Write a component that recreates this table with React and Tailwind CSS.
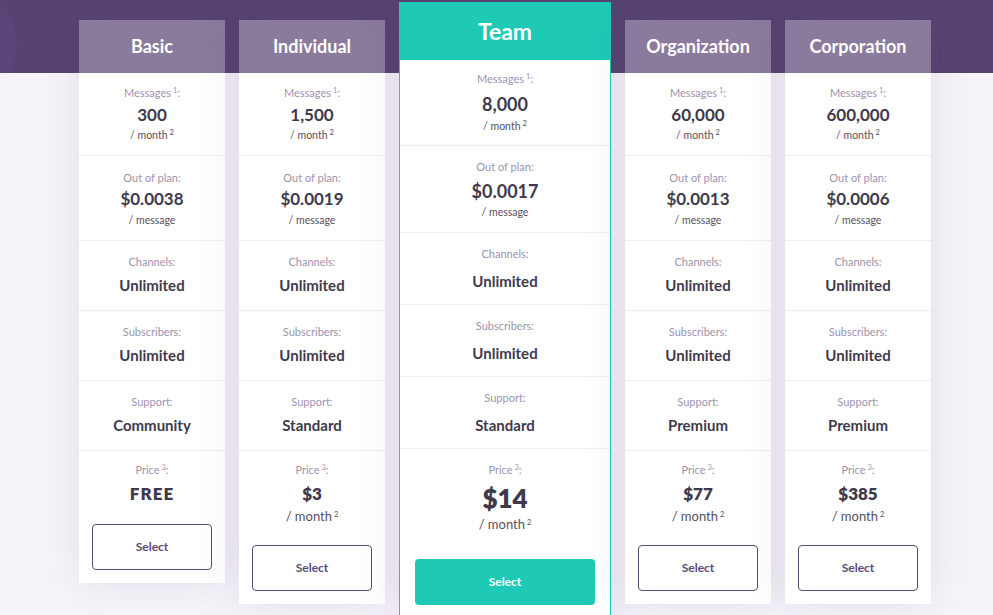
import React from "react";

const plans = [
  { name: "Basic", messages: "300", out: "$0.0038", support: "Community", price: "FREE", monthly: false },
  { name: "Individual", messages: "1,500", out: "$0.0019", support: "Standard", price: "$3", monthly: true },
  { name: "Team", messages: "8,000", out: "$0.0017", support: "Standard", price: "$14", monthly: true, featured: true },
  { name: "Organization", messages: "60,000", out: "$0.0013", support: "Premium", price: "$77", monthly: true },
  { name: "Corporation", messages: "600,000", out: "$0.0006", support: "Premium", price: "$385", monthly: true },
];

const label = "text-[11px] leading-[14px] text-[#9d92b0]";
const value = "leading-[22px] font-bold text-[#3f3a4b]";
const sub = "text-[10.5px] leading-[14px] text-[#56505f]";

function Sup({ n }) {
  return <sup className="text-[7.5px] ml-[2px]">{n}</sup>;
}

function PlanCard({ plan }) {
  const f = plan.featured;
  return (
    <div
      className={
        f
          ? "w-[212px] shrink-0 bg-white border border-[#1ecab6] shadow-[0_0_40px_rgba(87,67,114,0.12)]"
          : "w-[146px] shrink-0 mt-[18px] bg-white shadow-[0_0_40px_rgba(87,67,114,0.12)]"
      }
    >
      {/* header */}
      <div
        className={
          f
            ? "h-[57px] bg-[#1ecab6] flex items-center justify-center text-white font-bold text-[23px]"
            : "h-[53px] bg-[#8a7a9c] flex items-center justify-center text-white font-bold text-[18px]"
        }
      >
        {plan.name}
      </div>

      {/* messages */}
      <div className={(f ? "h-[86px] pt-[12px]" : "h-[83px] pt-[13px]") + " border-b border-[#efedf3] flex flex-col items-center"}>
        <div className={label}>
          Messages<Sup n="1" />:
        </div>
        <div className={value + (f ? " text-[18px] mt-[7px]" : " text-[17px] mt-[4px]")}>{plan.messages}</div>
        <div className={sub + (f ? " mt-[4px]" : " mt-[2px]")}>
          / month<Sup n="2" />
        </div>
      </div>

      {/* out of plan */}
      <div className={(f ? "h-[87px] pt-[14px]" : "h-[85px] pt-[15px]") + " border-b border-[#efedf3] flex flex-col items-center"}>
        <div className={label}>Out of plan:</div>
        <div className={value + (f ? " text-[18px] mt-[6px]" : " text-[17px] mt-[3px]")}>{plan.out}</div>
        <div className={sub + (f ? " mt-[3px]" : " mt-[3px]")}>/ message</div>
      </div>

      {/* channels / subscribers / support */}
      {[
        ["Channels:", "Unlimited"],
        ["Subscribers:", "Unlimited"],
        ["Support:", plan.support],
      ].map(([l, v]) => (
        <div
          key={l}
          className={(f ? "h-[72px]" : "h-[70px]") + " pt-[14px] border-b border-[#efedf3] flex flex-col items-center"}
        >
          <div className={label}>{l}</div>
          <div className={value + (f ? " text-[15px] mt-[9px]" : " text-[15px] mt-[5px]")}>{v}</div>
        </div>
      ))}

      {/* price */}
      <div className={(f ? "pt-[14px] px-[15px] pb-[20px]" : "pt-[12px] px-[13px] pb-[13px]") + " flex flex-col items-center"}>
        <div className={label}>
          Price<Sup n="3" />:
        </div>
        {f ? (
          <div className="text-[26px] leading-[32px] font-extrabold text-[#3f3a4b] mt-[5px]">{plan.price}</div>
        ) : (
          <div className={"text-[17px] leading-[24px] font-extrabold text-[#3f3a4b] mt-[5px]" + (plan.price === "FREE" ? " tracking-[1px]" : "")}>
            {plan.price}
          </div>
        )}
        {plan.monthly && (
          <div className="text-[13px] leading-[18px] text-[#56505f] mt-[1px]">
            / month<Sup n="2" />
          </div>
        )}
        <button
          className={
            f
              ? "mt-[26px] w-full h-[46px] rounded-[4px] bg-[#1ecab6] text-white text-[12px] font-bold"
              : "w-full h-[46px] rounded-[4px] border border-[#5a4a7a] bg-white text-[#5a4a7a] text-[12px] font-bold " +
                (plan.monthly ? "mt-[20px]" : "mt-[18px]")
          }
        >
          Select
        </button>
      </div>
    </div>
  );
}

export default function App() {
  return (
    <div
      className="h-[615px] overflow-hidden bg-[#574372] bg-[linear-gradient(to_bottom,transparent_73px,#f6f4fa_73px),radial-gradient(circle_at_-42px_44px,#5a4679_0,#5a4679_58px,transparent_59px)]"
      style={{ fontFamily: "Lato, 'Open Sans', sans-serif" }}
    >
      <div className="flex items-start gap-[14px] pl-[79px] pt-[2px]">
        {plans.map((p) => (
          <PlanCard key={p.name} plan={p} />
        ))}
      </div>
    </div>
  );
}
